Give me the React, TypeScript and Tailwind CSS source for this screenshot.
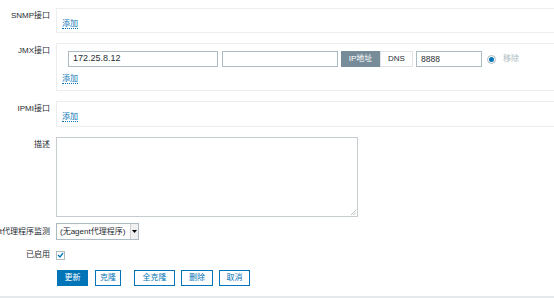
import React from "react";

const font = { fontFamily: '"Liberation Sans", "Noto Sans CJK SC", sans-serif' };

function Label({ children }: { children: React.ReactNode }) {
  return (
    <div className="w-[56px] shrink-0 pr-[6px] pt-[3px] text-right text-[8px] leading-[10px] text-[#1f2c33] whitespace-nowrap overflow-visible">
      {children}
    </div>
  );
}

function AddLink() {
  return (
    <span className="text-[8px] leading-[10px] text-[#0275b8] border-b border-dotted border-[#0275b8]">添加</span>
  );
}

export default function App() {
  return (
    <div style={font} className="w-[554px] h-[298px] overflow-hidden bg-white flex flex-col">
      <div className="flex flex-col pt-[8px]">
        {/* SNMP */}
        <div className="flex">
          <Label>SNMP接口</Label>
          <div className="flex-1 border border-r-0 border-[#ebeef0] h-[25px] pl-[5px] pt-[7px]">
            <div className="leading-[10px]"><AddLink /></div>
          </div>
        </div>
        {/* JMX */}
        <div className="flex mt-[10px]">
          <Label>JMX接口</Label>
          <div className="flex-1 border border-r-0 border-[#ebeef0] h-[48px] pl-[5px] pt-[7px]">
            <div className="flex items-center h-[16px]">
              <div className="w-[6px]" />
              <div className="w-[150px] h-[16px] border border-[#acbbc2] bg-white flex items-center px-[4px] text-[9px] text-[#1f2c33]">172.25.8.12</div>
              <div className="w-[116px] h-[16px] border border-[#acbbc2] bg-white ml-[4px]" />
              <div className="flex ml-[3px] h-[16px]">
                <div className="w-[39px] h-[16px] bg-[#768d99] border border-[#768d99] text-white text-[8px] flex items-center justify-center">IP地址</div>
                <div className="w-[33px] h-[16px] bg-white border border-[#dfe4e7] text-[#1f2c33] text-[8px] flex items-center justify-center">DNS</div>
              </div>
              <div className="w-[66px] h-[16px] border border-[#acbbc2] bg-white ml-[3px] flex items-center px-[4px] text-[8.5px] text-[#1f2c33]">8888</div>
              <div className="ml-[5px] w-[9px] h-[9px] rounded-full border border-[#acbbc2] bg-white flex items-center justify-center">
                <div className="w-[5px] h-[5px] rounded-full bg-[#0275b8]" />
              </div>
              <span className="ml-[7px] text-[8px] text-[#acbbc2]">移除</span>
            </div>
            <div className="mt-[4px] leading-[10px]"><AddLink /></div>
          </div>
        </div>
        {/* IPMI */}
        <div className="flex mt-[10px]">
          <Label>IPMI接口</Label>
          <div className="flex-1 border border-r-0 border-[#ebeef0] h-[26px] pl-[5px] pt-[7px]">
            <div className="leading-[10px]"><AddLink /></div>
          </div>
        </div>
        {/* Description */}
        <div className="flex mt-[10px]">
          <Label>描述</Label>
          <div className="relative w-[302px] h-[80px] border border-[#c6cdd1] bg-white">
            <svg className="absolute right-[1px] bottom-[1px]" width="6" height="6" viewBox="0 0 6 6">
              <line x1="1" y1="6" x2="6" y2="1" stroke="#b0b0b0" strokeWidth="0.8" />
              <line x1="3.5" y1="6" x2="6" y2="3.5" stroke="#b0b0b0" strokeWidth="0.8" />
            </svg>
          </div>
        </div>
        {/* Proxy */}
        <div className="flex mt-[6px] items-center">
          <div className="w-[56px] shrink-0 pr-[6px] text-[8px] leading-[10px] text-[#1f2c33] whitespace-nowrap flex justify-end overflow-hidden">
            <span>由agent代理程序监测</span>
          </div>
          <div className="w-[83px] h-[17px] border border-[#acbbc2] bg-white flex items-center">
            <span className="flex-1 pl-[3px] text-[8px] text-[#1f2c33] whitespace-nowrap">(无agent代理程序)</span>
            <div className="w-[8px] h-[15px] border-l border-[#d0d0d0] bg-[#f0f0f0] flex items-center justify-center">
              <svg width="5" height="3" viewBox="0 0 5 3"><path d="M0 0 L5 0 L2.5 3 Z" fill="#000" /></svg>
            </div>
          </div>
        </div>
        {/* Enabled */}
        <div className="flex mt-[10px] items-center">
          <div className="w-[56px] shrink-0 pr-[6px] text-right text-[8px] leading-[10px] text-[#1f2c33]">已启用</div>
          <div className="w-[9px] h-[9px] border border-[#acbbc2] bg-white flex items-center justify-center">
            <svg width="7" height="6" viewBox="0 0 7 6"><path d="M1 3 L3 5 L6 1" stroke="#0275b8" strokeWidth="1.3" fill="none" /></svg>
          </div>
        </div>
        {/* Buttons */}
        <div className="flex mt-[10px] pl-[57px] h-[16px]">
          <div className="w-[31px] h-[16px] bg-[#0275b8] text-white text-[8px] flex items-center justify-center">更新</div>
          <div className="ml-[7px] w-[26px] h-[16px] border border-[#0275b8] text-[#0275b8] text-[8px] flex items-center justify-center">克隆</div>
          <div className="ml-[13px] w-[41px] h-[16px] border border-[#0275b8] text-[#0275b8] text-[8px] flex items-center justify-center">全克隆</div>
          <div className="ml-[6px] w-[32px] h-[16px] border border-[#0275b8] text-[#0275b8] text-[8px] flex items-center justify-center">删除</div>
          <div className="ml-[6px] w-[31px] h-[16px] border border-[#0275b8] text-[#0275b8] text-[8px] flex items-center justify-center">取消</div>
        </div>
      </div>
      <div className="mt-[10px] h-[4px] bg-[#e6e9eb]" />
    </div>
  );
}
